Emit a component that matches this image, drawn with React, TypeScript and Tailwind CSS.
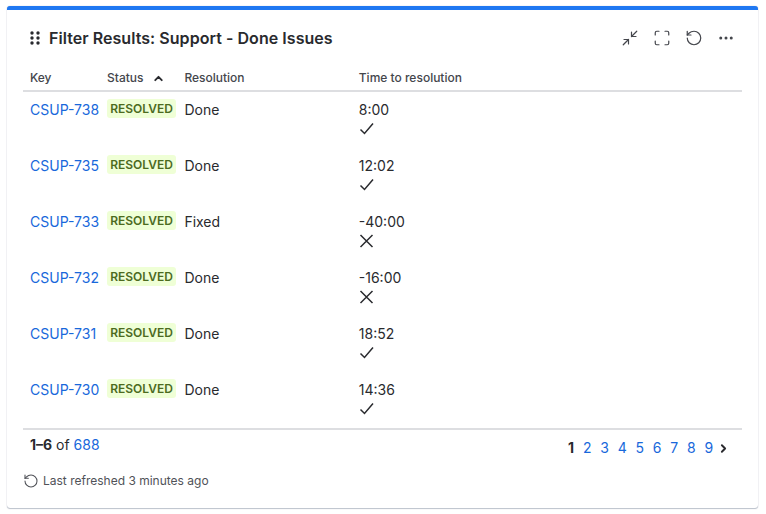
// Filter results gadget: done support issues with time to resolution.
import { ChevronRight, ChevronUp, RotateCcw, Maximize, Ellipsis, Minimize2 } from "lucide-react";

const issues = [
  { key: "CSUP-738", resolution: "Done", time: "8:00", met: true },
  { key: "CSUP-735", resolution: "Done", time: "12:02", met: true },
  { key: "CSUP-733", resolution: "Fixed", time: "-40:00", met: false },
  { key: "CSUP-732", resolution: "Done", time: "-16:00", met: false },
  { key: "CSUP-731", resolution: "Done", time: "18:52", met: true },
  { key: "CSUP-730", resolution: "Done", time: "14:36", met: true },
];

const pages = [2, 3, 4, 5, 6, 7, 8, 9];

function DragHandle() {
  return (
    <svg width="10" height="14" viewBox="0 0 10 14" className="fill-[#292a2e]">
      <circle cx="2" cy="2" r="1.7" />
      <circle cx="8" cy="2" r="1.7" />
      <circle cx="2" cy="7" r="1.7" />
      <circle cx="8" cy="7" r="1.7" />
      <circle cx="2" cy="12" r="1.7" />
      <circle cx="8" cy="12" r="1.7" />
    </svg>
  );
}

function CheckMark() {
  return (
    <svg width="16" height="16" viewBox="0 0 16 16" fill="none" stroke="currentColor" strokeWidth="1.5" className="mt-[2px]">
      <path d="M1.5 8.5 5.5 12.5 14 2.5" />
    </svg>
  );
}

function CrossMark() {
  return (
    <svg width="16" height="16" viewBox="0 0 16 16" fill="none" stroke="currentColor" strokeWidth="1.5" className="mt-[2px]">
      <path d="M1.5 2 13.5 14M13.5 2 1.5 14" />
    </svg>
  );
}

export default function App() {
  return (
    <div className="h-[514px] w-[766px] bg-white pl-[7px] pt-[6px] font-['Inter',sans-serif] text-[#292a2e]">
      <div className="flex h-[502px] w-[751px] flex-col rounded-[3px] border-t-4 border-[#1f78f2] bg-white px-4 shadow-[0_1px_1px_rgba(9,30,66,0.25),0_0_1px_rgba(9,30,66,0.31)]">
        <div className="flex h-[56px] items-center justify-between">
          <div className="flex items-center gap-[9px] pl-[7px]">
            <DragHandle />
            <h1 className="text-base leading-5 font-semibold tracking-[0.05px]">Filter Results: Support - Done Issues</h1>
          </div>
          <div className="flex items-center gap-[14px] pr-[7px] text-[#44464c]">
            <Minimize2 size={18} strokeWidth={1.6} />
            <Maximize size={18} strokeWidth={1.6} />
            <RotateCcw size={18} strokeWidth={1.6} />
            <Ellipsis size={18} strokeWidth={2} />
          </div>
        </div>

        <div className="grid h-[26px] grid-cols-[77px_77.4px_174.4px_1fr] items-start border-b-2 border-[#dddee1] pl-[7px] pt-[4px] text-xs leading-4 font-medium text-[#44464c]">
          <span>Key</span>
          <span className="flex items-center gap-[9px]">
            Status
            <ChevronUp size={13} strokeWidth={3.5} className="text-[#292a2e]" />
          </span>
          <span>Resolution</span>
          <span>Time to resolution</span>
        </div>

        <div className="flex flex-col">
          {issues.map((issue) => (
            <div
              key={issue.key}
              className="grid h-[56px] grid-cols-[77px_77.4px_174.4px_1fr] items-start pl-[7px] pt-[8px] text-sm leading-[19px]"
            >
              <a className="text-[#1868db]">{issue.key}</a>
              <span className="mt-[-1px] h-[19px] w-[69px] rounded-[3px] bg-[#efffd6] text-center text-xs leading-[20px] font-semibold text-[#4c6b1f]">
                RESOLVED
              </span>
              <span>{issue.resolution}</span>
              <div className="flex flex-col items-start">
                <span>{issue.time}</span>
                {issue.met ? <CheckMark /> : <CrossMark />}
              </div>
            </div>
          ))}
        </div>

        <div className="flex h-[45px] items-start justify-between border-t-2 border-[#dddee1] pl-[7px] pt-[5px] text-sm leading-5">
          <span>
            <strong className="font-bold">1–6</strong> of <a className="text-[#1868db]">688</a>
          </span>
          <div className="flex items-center gap-[8.8px] pr-[12px] pt-[3px]">
            <span className="font-bold">1</span>
            {pages.map((page) => (
              <a key={page} className="text-[#1868db]">
                {page}
              </a>
            ))}
            <ChevronRight size={13} strokeWidth={3.5} className="-ml-[5px]" />
          </div>
        </div>

        <div className="flex items-center gap-[4px] text-xs leading-4 text-[#505258]">
          <RotateCcw size={16} strokeWidth={1.6} />
          Last refreshed 3 minutes ago
        </div>
      </div>
    </div>
  );
}
